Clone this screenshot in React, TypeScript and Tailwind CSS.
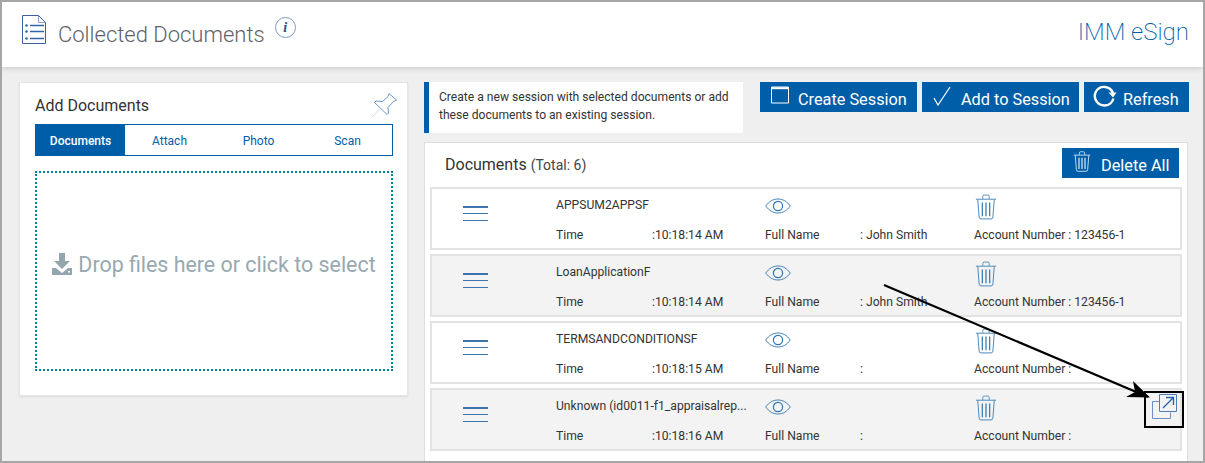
import React from "react";

function Trash({ className = "" }: { className?: string }) {
  return (
    <svg viewBox="0 0 24 28" className={className} fill="none" stroke="currentColor">
      <path d="M1 5.500h22" strokeWidth="1" />
      <path d="M8.500 5V2.500q0-1.500 1.500-1.500h4q1.500 0 1.500 1.500V5" strokeWidth="0.9" />
      <path d="M3 6l1.500 19q.2 2 2 2h11q1.800 0 2-2L21 6" strokeWidth="1" />
      <path d="M8 9v15M12 9v15M16 9v15" strokeWidth="1.400" />
    </svg>
  );
}

function Eye({ className = "" }: { className?: string }) {
  return (
    <svg viewBox="0 0 26 16" className={className} fill="none" stroke="currentColor">
      <path d="M.7 8C4 3.500 8 1 13 1s9 2.500 12.300 7C22 12.500 18 15 13 15S4 12.500.7 8z" strokeWidth="0.9" />
      <circle cx="13" cy="8" r="4.600" strokeWidth="1.200" />
    </svg>
  );
}

type Doc = { name: string; time: string; full: string; acct: string; grey: boolean };
const docs: Doc[] = [
  { name: "APPSUM2APPSF", time: ":10:18:14 AM", full: ": John Smith", acct: "Account Number : 123456-1", grey: false },
  { name: "LoanApplicationF", time: ":10:18:14 AM", full: ": John Smith", acct: "Account Number : 123456-1", grey: true },
  { name: "TERMSANDCONDITIONSF", time: ":10:18:15 AM", full: ":", acct: "Account Number :", grey: false },
  { name: "Unknown (id0011-f1_appraisalrep...", time: ":10:18:16 AM", full: ":", acct: "Account Number :", grey: true },
];

function Row({ d }: { d: Doc }) {
  return (
    <div className={`h-[63px] border-2 border-[#e3e3e3] grid grid-cols-[124px_96px_113px_95px_114px_1fr] grid-rows-[34px_1fr] text-[12.15px] leading-[14px] text-[#333] ${d.grey ? "bg-[#f3f3f3]" : "bg-white"}`}>
      <div className="row-span-2 pl-[31px] pt-[17px]">
        <div className="w-[25px] h-[15px] flex flex-col justify-between">
          <div className="h-[1.5px] bg-[#3e74ad]" />
          <div className="h-[1.5px] bg-[#3e74ad]" />
          <div className="h-[1.5px] bg-[#3e74ad]" />
        </div>
      </div>
      <div className="col-span-2 pt-[9px] whitespace-nowrap">{d.name}</div>
      <div className="col-span-2 pt-[9px] text-[#2f74b0]">
        <Eye className="w-[26px] h-[16px]" />
      </div>
      <div className="pt-[5px] pl-[1px] text-[#3c7fb5]">
        <Trash className="w-[22px] h-[26px]" />
      </div>
      <div className="pt-[5px]">Time</div>
      <div className="pt-[5px] whitespace-nowrap">{d.time}</div>
      <div className="pt-[5px]">Full Name</div>
      <div className="pt-[5px] whitespace-nowrap">{d.full}</div>
      <div className="pt-[5px] whitespace-nowrap">{d.acct}</div>
    </div>
  );
}

function ActionButton({ icon, label, className }: { icon: React.ReactNode; label: string; className: string }) {
  return (
    <button className={`h-[30px] bg-[#005ea8] text-white text-[16.3px] flex items-center whitespace-nowrap ${className}`}>
      {icon}
      <span className="pt-[7px]">{label}</span>
    </button>
  );
}

export default function App() {
  return (
    <div
      className="relative w-[1205px] h-[463px] overflow-hidden border-2 border-[#a6a6a6] bg-[#efefef] flex flex-col"
      style={{ fontFamily: "Roboto, 'Liberation Sans', sans-serif" }}
    >
      <header className="h-[65px] shrink-0 bg-white shadow-[0_1px_6px_rgba(0,0,0,0.18)] flex items-start justify-between pl-[20px] pr-[14px]">
        <div className="flex items-start">
          <svg viewBox="0 0 24 29" className="w-[24px] h-[29px] mt-[13px] text-[#3f5fa8]" fill="none" stroke="currentColor">
            <path d="M.5.5h16l7 7v21H.5z" strokeWidth="1" />
            <path d="M16.500.5v7h7" strokeWidth="0.6" />
            <path d="M8 10.500h14M8 16.500h14M8 23.500h14" stroke="#2f66ab" strokeWidth="1.300" />
            <circle cx="4.500" cy="10.500" r="1.300" fill="#2f66ab" stroke="none" />
            <circle cx="4.500" cy="16.500" r="1.300" fill="#2f66ab" stroke="none" />
            <circle cx="4.500" cy="23.500" r="1.300" fill="#2f66ab" stroke="none" />
          </svg>
          <h1 className="ml-[12px] mt-[18px] text-[22px] leading-[30px] font-light text-[#5f6368] whitespace-nowrap">Collected Documents</h1>
          <div className="ml-[10px] mt-[15px] w-[21px] h-[21px] rounded-full border border-[#7d9cc0] flex items-center justify-center text-[14px] italic font-bold text-[#2d4e7e]" style={{ fontFamily: "'Liberation Serif', serif" }}>
            i
          </div>
        </div>
        <div className="mt-[15px] text-[24px] leading-[30px] font-extralight text-[#005ea8] whitespace-nowrap">IMM eSign</div>
      </header>

      <main className="flex-1 min-h-0 flex items-start pl-[17px] pr-[15px] pt-[15px] gap-[16px]">
        <section className="w-[389px] h-[314px] shrink-0 bg-white border border-[#e4e4e4] shadow-[0_1px_2px_rgba(0,0,0,0.08)] pl-[15px] pr-[14px]">
          <div className="relative h-[41px] pt-[13px] text-[16px] leading-[19px] text-[#333]">
            Add Documents
            <svg viewBox="0 0 26 25" className="absolute right-[-4px] top-[10px] w-[26px] h-[25px] text-[#5b8fc0]" fill="none" stroke="currentColor" strokeWidth="0.9">
              <path d="M18 .5l7.500 6.500-3 1.500-5.500 6 .5 5.500-1.500 1.500L3.500 9.500 5 8l6.500.5 5.500-5z" />
              <path d="M9 15.500L.5 24.500" strokeWidth="0.7" opacity="0.45" />
            </svg>
          </div>
          <div className="h-[32px] border border-[#005ea8] flex text-[12px] text-[#005ea8]">
            <div className="w-[89px] bg-[#005ea8] text-white font-medium flex items-center justify-center pt-[1px]">Documents</div>
            <div className="w-[89px] flex items-center justify-center pt-[1px]">Attach</div>
            <div className="w-[89px] flex items-center justify-center pt-[1px]">Photo</div>
            <div className="flex-1 flex items-center justify-center pt-[1px]">Scan</div>
          </div>
          <div className="mt-[15px] h-[200px] border-2 border-dotted border-[#00829b] flex items-center justify-center text-[21.4px] text-[#98a9b0] whitespace-nowrap pb-[12px]">
            <svg viewBox="0 0 20 22" className="w-[20px] h-[22px] mr-[6px] mt-[-2px] text-[#94a6ad]" fill="currentColor">
              <path d="M7 0h6v8h5l-8 8-8-8h5z" />
              <path d="M0 15l4 0 6 5 6-5h4v7H0z" />
              <rect x="16" y="18" width="2" height="1.500" fill="#fff" />
            </svg>
            Drop files here or click to select
          </div>
        </section>

        <div className="flex-1 min-w-0 flex flex-col">
          <div className="flex items-start justify-between h-[60px] -mr-[1px]">
            <div className="w-[319px] h-[51px] bg-white border-l-[5px] border-[#005ea8] pl-[10px] pt-[6px] text-[12.1px] leading-[18px] text-[#333]">
              Create a new session with selected documents or add these documents to an existing session.
            </div>
            <div className="flex gap-[5px]">
              <ActionButton
                className="w-[157px] pl-[11px]"
                label="Create Session"
                icon={
                  <svg viewBox="0 0 18 18" className="w-[18px] h-[18px] mr-[9px] mb-[4px]" fill="none" stroke="currentColor">
                    <path d="M.5 1h17v16H.5z" strokeWidth="1" />
                    <path d="M.5 2.200h17" strokeWidth="2" />
                  </svg>
                }
              />
              <ActionButton
                className="w-[157px] pl-[11px]"
                label="Add to Session"
                icon={
                  <svg viewBox="0 0 18 20" className="w-[18px] h-[20px] mr-[10px] mb-[2px]" fill="none" stroke="currentColor" strokeWidth="1.200">
                    <path d="M1 12l4 7L17 1" />
                  </svg>
                }
              />
              <ActionButton
                className="w-[105px] pl-[9px]"
                label="Refresh"
                icon={
                  <svg viewBox="0 0 24 22" className="w-[24px] h-[22px] mr-[6px] mb-[2px]" fill="none" stroke="currentColor" strokeWidth="2.400">
                    <path d="M20 8A9.500 9.500 0 0 0 3 6.500a9.500 9.500 0 0 0 8.500 14 9.500 9.500 0 0 0 9-7" />
                    <path d="M15.500 7.500h8l-3.500 5z" fill="currentColor" stroke="none" />
                  </svg>
                }
              />
            </div>
          </div>
          <section className="bg-white border border-[#dedede] h-[320px] px-[5px]">
            <div className="flex items-start justify-between h-[44px] pt-[5px] pr-[3px]">
              <div className="pl-[15px] pt-[7px] text-[16px] leading-[19px] text-[#333] whitespace-nowrap">
                Documents <span className="text-[14px] text-[#444]">(Total: 6)</span>
              </div>
              <ActionButton
                className="w-[117px] pl-[11px]"
                label="Delete All"
                icon={<Trash className="w-[18px] h-[23px] mr-[10px] mb-[3px]" />}
              />
            </div>
            <div className="flex flex-col gap-[4px]">
              {docs.map((d) => (
                <Row key={d.name} d={d} />
              ))}
            </div>
          </section>
        </div>
      </main>

      <svg viewBox="0 0 1205 463" className="absolute left-[-2px] top-[-2px] w-[1205px] h-[463px] pointer-events-none">
        <path d="M884 285L1148 397" stroke="#000" strokeWidth="2.200" />
        <path d="M1150 397.500L1126 397L1135 392L1133 381z" fill="#000" />
        <rect x="1145" y="392" width="38" height="35" fill="none" stroke="#000" strokeWidth="2" />
        <path d="M1159 401.500h-6.500v17h18v-6" fill="none" stroke="#6f8fc4" strokeWidth="1" />
        <path d="M1159.500 394.500h17v17h-17z" fill="#f3f3f3" stroke="#4d7db8" strokeWidth="1" />
        <path d="M1163 408l10-10M1166 397.500h7.500v7.500" fill="none" stroke="#1f64a8" strokeWidth="1.300" />
      </svg>
    </div>
  );
}
